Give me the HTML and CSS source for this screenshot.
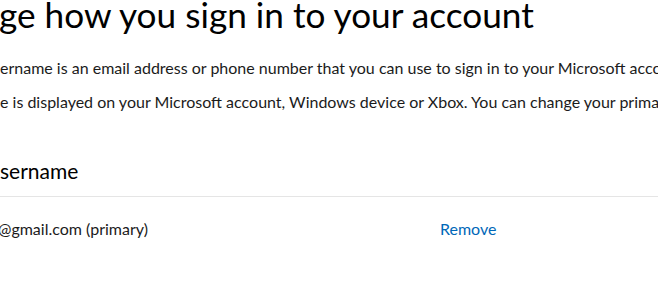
FILE: index.html
```html
<!DOCTYPE html>
<html lang="en">
<head>
<meta charset="utf-8">
<title>Manage how you sign in to your account</title>
<link rel="stylesheet" href="styles.css">
</head>
<body>
<main class="page">
  <h1 class="title">ge how you sign in to your account</h1>
  <p class="desc desc-first">ername is an email address or phone number that you can use to sign in to your Microsoft account.</p>
  <p class="desc desc-second">e is displayed on your Microsoft account, Windows device or Xbox. You can change your primary username.</p>
  <section class="usernames">
    <h2 class="section-title">sername</h2>
    <div class="row">
      <span class="email">@gmail.com (primary)</span>
      <a class="action" href="#">Remove</a>
    </div>
  </section>
</main>
</body>
</html>
```
FILE: styles.css
```css
html, body {
  margin: 0;
  padding: 0;
  background: #ffffff;
}
body {
  width: 658px;
  height: 301px;
  overflow: hidden;
  font-family: Lato, "Noto Sans", sans-serif;
  color: #1b1b1b;
}
.page {
  display: flex;
  flex-direction: column;
  white-space: nowrap;
  overflow: hidden;
}
.title {
  margin: 0;
  font-size: 35.2px;
  font-weight: 400;
  line-height: 29px;
  text-indent: -1px;
  color: #000;
}
.desc {
  margin: 0;
  font-size: 16px;
  line-height: 24px;
  overflow: hidden;
}
.desc-first {
  margin-top: 27px;
}
.desc-second {
  margin-top: 10px;
}
.usernames {
  margin-top: 43px;
}
.section-title {
  margin: 0;
  font-size: 21px;
  font-weight: 400;
  line-height: 28px;
  padding-bottom: 11px;
  border-bottom: 1px solid #e5e5e5;
  color: #000;
}
.row {
  display: grid;
  grid-template-columns: 440px auto;
  margin-top: 20px;
  font-size: 16px;
  line-height: 24px;
}
.email {
  text-indent: -2px;
}
.action {
  color: #0067b8;
  text-decoration: none;
}
```
